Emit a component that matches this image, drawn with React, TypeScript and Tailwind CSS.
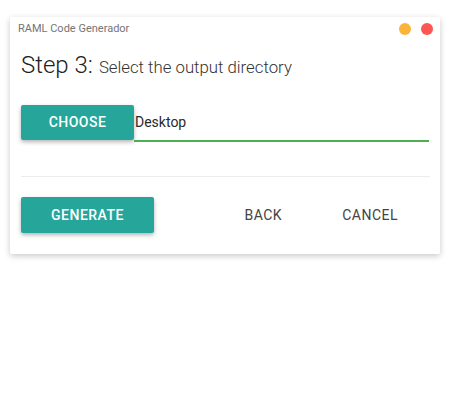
import React, { useState } from "react";

const App = () => {
  const [dir, setDir] = useState("Desktop");

  return (
    <div className="w-[450px] h-[400px] bg-white font-['Roboto',sans-serif] pt-[17px] pl-[10px]">
      <div className="w-[430px] bg-white rounded-[2px] shadow-[0_2px_6px_rgba(0,0,0,0.22)]">
        <div className="h-[24px] flex items-center justify-between pl-[8px] pr-[7px]">
          <span className="text-[11px] text-[#757575]">RAML Code Generador</span>
          <div className="flex items-center gap-[10px]">
            <span className="w-[12px] h-[12px] rounded-full bg-[#fbb43a]" />
            <span className="w-[12px] h-[12px] rounded-full bg-[#fc5753]" />
          </div>
        </div>

        <div className="pl-[11px] pr-[10px] pb-[21px]">
          <h1 className="mt-[10px] flex items-baseline gap-[6px] leading-[28px] text-[#212121] font-light">
            <span className="text-[24px]">Step 3:</span>
            <span className="text-[16.8px] text-[#333]">Select the output directory</span>
          </h1>

          <div className="mt-[24px] flex items-start pr-[1px]">
            <button className="w-[113px] h-[35px] rounded-[2px] bg-[#26a69a] text-white text-[14px] font-medium tracking-[0.5px] shadow-[0_2px_4px_rgba(0,0,0,0.3)]">
              CHOOSE
            </button>
            <input
              value={dir}
              onChange={(e) => setDir(e.target.value)}
              className="flex-1 h-[37px] border-b-2 border-[#4caf50] outline-none text-[14px] text-[#2a2a2a] pl-[1px] pb-[1px]"
            />
          </div>

          <div className="mt-[34px] h-px bg-[#ececec]" />

          <div className="mt-[20px] flex items-center">
            <button className="w-[133px] h-[36px] rounded-[2px] bg-[#26a69a] text-white text-[14px] font-medium tracking-[0.5px] shadow-[0_2px_4px_rgba(0,0,0,0.3)]">
              GENERATE
            </button>
            <div className="flex-1" />
            <button className="h-[36px] px-[16px] text-[14px] text-[#444] tracking-[0.5px]">BACK</button>
            <button className="h-[36px] px-[16px] ml-[28px] mr-[16px] text-[14px] text-[#444] tracking-[0.5px]">
              CANCEL
            </button>
          </div>
        </div>
      </div>
    </div>
  );
};

export default App;
